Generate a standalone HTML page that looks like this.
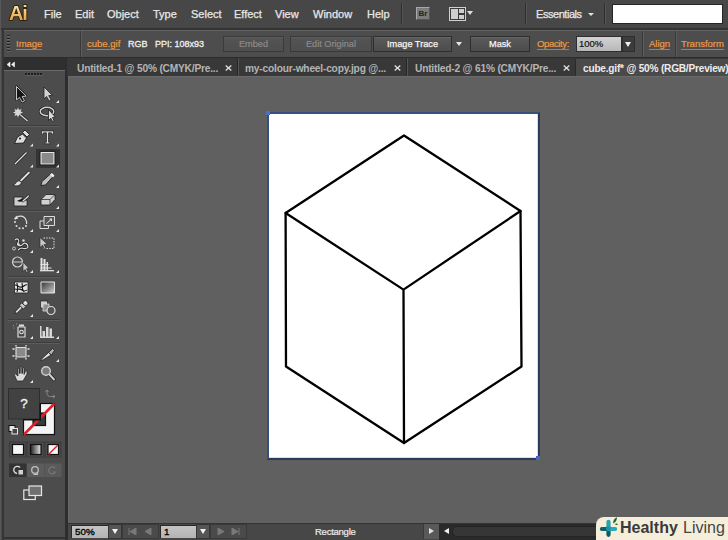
<!DOCTYPE html>
<html><head><meta charset="utf-8">
<style>
*{margin:0;padding:0;box-sizing:border-box}
html,body{width:728px;height:540px;overflow:hidden;background:#606060;font-family:"Liberation Sans",sans-serif}
.a{position:absolute}
.menu{left:0;top:0;width:728px;height:28px;background:#474747}
.mi{position:absolute;top:8px;font-size:11px;color:#e8e8e8;line-height:12px;white-space:nowrap;-webkit-text-stroke:0.25px #e8e8e8}
.ctl{left:3px;top:30px;width:725px;height:27px;background:#4d4d4d;border-top:1px solid #626262;border-left:1px solid #5e5e5e}
.ct{position:absolute;top:39px;font-size:9.5px;line-height:10px;color:#f0f0f0;white-space:nowrap}
.lk{color:#ec9a44;border-bottom:1px solid #c8782e;padding-bottom:0px;-webkit-text-stroke:0.2px #ec9a44}
.btn{position:absolute;top:36px;height:16px;background:linear-gradient(#5a5a5a,#4c4c4c);border:1px solid #2e2e2e;box-shadow:inset 0 1px 0 #666;font-size:9.2px;line-height:14px;text-align:center;color:#f4f4f4;-webkit-text-stroke:0.25px #f4f4f4}
.dis{color:#8a8a8a;-webkit-text-stroke:0.2px #8a8a8a;background:linear-gradient(#545454,#4e4e4e);box-shadow:inset 0 1px 0 #5c5c5c;border-color:#3a3a3a}
.tabs{left:67px;top:58px;width:661px;height:18px;background:#383838}
.tab{position:absolute;top:63px;font-size:10.2px;letter-spacing:-0.2px;font-weight:bold;line-height:11px;color:#b4b4b4;white-space:nowrap}
.x{position:absolute;top:62px;font-size:11px;font-weight:bold;color:#dcdcdc;line-height:12px}
.sep{position:absolute;width:1px;background:#2e2e2e;box-shadow:1px 0 0 #555}
</style></head><body>
<!-- menu bar -->
<div class="a menu"></div>
<div class="a" style="left:0;top:28px;width:728px;height:2px;background:#343434"></div>
<div class="a" style="left:9px;top:2px;font-size:20px;font-weight:bold;line-height:22px;letter-spacing:-1.2px;color:#2a1c08;-webkit-text-stroke:1.6px #2a1c08">Ai</div>
<div class="a" style="left:9px;top:2px;font-size:20px;font-weight:bold;line-height:22px;letter-spacing:-1.2px;background:linear-gradient(#f8dc98 25%,#e8a040 85%);-webkit-background-clip:text;background-clip:text;color:transparent">Ai</div>
<div class="mi" style="left:44px">File</div>
<div class="mi" style="left:75px">Edit</div>
<div class="mi" style="left:107px">Object</div>
<div class="mi" style="left:153px">Type</div>
<div class="mi" style="left:191px">Select</div>
<div class="mi" style="left:234px">Effect</div>
<div class="mi" style="left:275px">View</div>
<div class="mi" style="left:313px">Window</div>
<div class="mi" style="left:367px">Help</div>
<div class="sep" style="left:401px;top:3px;height:21px"></div>
<div class="a" style="left:416px;top:7px;width:14px;height:13px;background:#7c7c7c;border:1px solid #a8a8a8;border-right-color:#555;border-bottom-color:#555;font-size:8px;color:#222;text-align:center;line-height:11px;font-weight:bold">Br</div>
<div class="a" style="left:449px;top:7px;width:17px;height:14px;border:1px solid #d0d0d0;background:#3a3a3a"></div>
<div class="a" style="left:451px;top:9px;width:7px;height:10px;background:#cfcfcf"></div>
<div class="a" style="left:459px;top:9px;width:5px;height:4px;background:#cfcfcf"></div>
<div class="a" style="left:459px;top:15px;width:5px;height:4px;background:#cfcfcf"></div>
<div class="a" style="left:467px;top:11px;width:0;height:0;border-left:3px solid transparent;border-right:3px solid transparent;border-top:4px solid #e0e0e0"></div>
<div class="sep" style="left:525px;top:3px;height:21px"></div>
<div class="mi" style="left:536px;letter-spacing:-0.45px">Essentials</div>
<div class="a" style="left:588px;top:13px;width:0;height:0;border-left:3px solid transparent;border-right:3px solid transparent;border-top:3px solid #e0e0e0"></div>
<div class="sep" style="left:604px;top:3px;height:21px"></div>
<div class="a" style="left:612px;top:4px;width:111px;height:20px;background:#fff;border:1px solid #262626"></div>

<!-- control bar -->
<div class="a ctl"></div>
<div class="a" style="left:0;top:57px;width:728px;height:1px;background:#2b2b2b"></div>
<div class="ct lk" style="left:16px">Image</div>
<div class="sep" style="left:80px;top:31px;height:26px;background:#383838;box-shadow:1px 0 0 #5c5c5c"></div>
<div class="ct lk" style="left:87px">cube.gif</div>
<div class="ct" style="left:128px;font-size:9px;-webkit-text-stroke:0.3px #f0f0f0">RGB</div>
<div class="ct" style="left:155px;font-size:9px;-webkit-text-stroke:0.3px #f0f0f0">PPI: 108x93</div>
<div class="btn dis" style="left:223px;width:61px">Embed</div>
<div class="btn dis" style="left:290px;width:82px">Edit Original</div>
<div class="btn" style="left:373px;width:79px">Image Trace</div>
<div class="a" style="left:456px;top:42px;width:0;height:0;border-left:3px solid transparent;border-right:3px solid transparent;border-top:4px solid #e6e6e6"></div>
<div class="btn" style="left:470px;width:60px">Mask</div>
<div class="ct lk" style="left:537px;letter-spacing:-0.35px">Opacity:</div>
<div class="a" style="left:576px;top:36px;width:46px;height:16px;background:linear-gradient(#d2d2d2,#b8b8b8);border:1px solid #2e2e2e;font-size:9.5px;line-height:14px;color:#111;padding-left:2px;-webkit-text-stroke:0.2px #111">100%</div>
<div class="a" style="left:622px;top:36px;width:13px;height:16px;background:#3c3c3c;border:1px solid #2e2e2e"></div>
<div class="a" style="left:625px;top:42px;width:0;height:0;border-left:3.5px solid transparent;border-right:3.5px solid transparent;border-top:5px solid #f0f0f0"></div>
<div class="sep" style="left:642px;top:31px;height:26px;background:#383838;box-shadow:1px 0 0 #5c5c5c"></div>
<div class="ct lk" style="left:649px">Align</div>
<div class="sep" style="left:675px;top:31px;height:26px;background:#383838;box-shadow:1px 0 0 #5c5c5c"></div>
<div class="ct lk" style="left:681px">Transform</div>

<!-- left strip & panel -->
<div class="a" style="left:0;top:0;width:1px;height:540px;background:#585858"></div>
<div class="a" style="left:1px;top:30px;width:1px;height:510px;background:#4a4a4a"></div>
<div class="a" style="left:2px;top:30px;width:2px;height:510px;background:#363636"></div>
<div class="a" style="left:4px;top:58px;width:61px;height:482px;background:#4c4c4c"></div>
<div class="a" style="left:4px;top:58px;width:61px;height:12px;background:#2f2f2f"></div>
<div class="a" style="left:4px;top:70px;width:61px;height:1px;background:#6a6a6a"></div>
<div class="a" style="left:65px;top:58px;width:3px;height:482px;background:#2d2d2d"></div>
<div class="a" style="left:4px;top:537px;width:61px;height:2px;background:#333"></div>
<svg class="a" style="left:6px;top:61px" width="10" height="7"><path d="M4 1L1 3.5 4 6zM8.5 1L5.5 3.5 8.5 6z" fill="#f0f0f0" stroke="#f0f0f0" stroke-width=".6" stroke-linejoin="round"/></svg>
<div class="a" style="left:7px;top:35px;width:3px;height:17px;background:repeating-linear-gradient(#222 0 1px,#6a6a6a 1px 2px,#505050 2px 3px)"></div>
<svg class="a" style="left:0;top:0" width="68" height="540">
<defs>
<linearGradient id="gr" x1="0" y1="0" x2="1" y2="0"><stop offset="0" stop-color="#222"/><stop offset="1" stop-color="#e8e8e8"/></linearGradient>
<linearGradient id="gr2" x1="0" y1="0" x2="1" y2="1"><stop offset="0" stop-color="#333"/><stop offset="1" stop-color="#cfcfcf"/></linearGradient>
</defs>
<!-- gripper -->
<g fill="#1e1e1e"><rect x="25" y="73" width="2" height="2"/><rect x="28" y="73" width="2" height="2"/><rect x="31" y="73" width="2" height="2"/><rect x="34" y="73" width="2" height="2"/><rect x="37" y="73" width="2" height="2"/><rect x="40" y="73" width="2" height="2"/></g>
<g fill="#5e5e5e"><rect x="25" y="75" width="18" height="1"/></g>
<!-- separators -->
<g fill="#3e3e3e">
<rect x="8" y="125" width="52" height="1"/><rect x="8" y="210" width="52" height="1"/>
<rect x="8" y="276" width="52" height="1"/><rect x="8" y="319" width="52" height="1"/>
<rect x="8" y="342" width="52" height="1"/>
</g>
<g fill="#5c5c5c">
<rect x="8" y="126" width="52" height="1"/><rect x="8" y="211" width="52" height="1"/>
<rect x="8" y="277" width="52" height="1"/><rect x="8" y="320" width="52" height="1"/>
<rect x="8" y="343" width="52" height="1"/>
</g>
<!-- selected rect bg -->
<rect x="36" y="149" width="24" height="19" fill="#343434"/>
<!-- flyout triangles -->
<g fill="#e8e8e8">
<path d="M59 100v3h-3z"/>
<path d="M33 143.5v3h-3z"/><path d="M59 143.5v3h-3z"/>
<path d="M33 164.5v3h-3z"/><path d="M59 164.5v3h-3z"/>
<path d="M59 185v3h-3z"/>
<path d="M59 206v3h-3z"/>
<path d="M33 229v3h-3z"/><path d="M59 229v3h-3z"/>
<path d="M33 250v3h-3z"/>
<path d="M33 270v3h-3z"/><path d="M59 270v3h-3z"/>
<path d="M33 314v3h-3z"/>
<path d="M33 336v3h-3z"/><path d="M59 336v3h-3z"/>
<path d="M59 359v3h-3z"/>
<path d="M33 380v3h-3z"/>
</g>
<g stroke-linejoin="round">
<!-- selection -->
<path d="M16.5 86.5V100l3-2.6 2.6 4.6 2.4-1.1-2.3-4.4 4.1-.4z" fill="#151515" stroke="#1a1a1a" stroke-width="2.2"/><path d="M16.5 86.5V100l3-2.6 2.6 4.6 2.4-1.1-2.3-4.4 4.1-.4z" fill="#151515" stroke="#dcdcdc" stroke-width=".9"/>
<!-- direct selection -->
<path d="M44 87v12l2.6-2.5 2.5 4.5 2-1-2.4-4.4 3.6-.3z" fill="#d2d2d2" stroke="#202020" stroke-width=".8"/>
<!-- magic wand -->
<path d="M18 106.5l1.2 3 3-1.2-1.2 3 3 1.2-3 1.2 1.2 3-3-1.2-1.2 3-1.2-3-3 1.2 1.2-3-3-1.2 3-1.2-1.2-3 3 1.2z" fill="#d6d6d6" stroke="#222" stroke-width=".5"/>
<path d="M20 114.5l7.5 6.5" stroke="#202020" stroke-width="2.6"/>
<path d="M20 114.5l7.5 6.5" stroke="#d8d8d8" stroke-width="1.3"/>
<!-- lasso -->
<ellipse cx="47" cy="111.5" rx="6.8" ry="4.2" fill="none" stroke="#1c1c1c" stroke-width="2.8"/>
<ellipse cx="47" cy="111.5" rx="6.8" ry="4.2" fill="none" stroke="#d4d4d4" stroke-width="1.4"/>
<path d="M48.5 109.5v11l2.3-2.2 1.8 3.2 1.6-.8-1.7-3.2 3-.3z" fill="#d8d8d8" stroke="#1c1c1c" stroke-width=".8"/>
<!-- pen -->
<path d="M14.5 143.5l3-6.5 5-3 4 4-3 5z" fill="#dcdcdc" stroke="#1e1e1e" stroke-width=".9"/>
<path d="M22.5 132.5l2.5-2.5 4.5 4.5-2.5 2.5z" fill="#dcdcdc" stroke="#1e1e1e" stroke-width=".9"/>
<circle cx="20" cy="138.5" r="1" fill="#111"/>
<!-- type -->
<path d="M41.5 131h12v3.2h-1.3l-.7-1.4h-3v9.4h1.6v1.6h-5.2v-1.6h1.6v-9.4h-3l-.7 1.4h-1.3z" fill="#e4e4e4" stroke="#1e1e1e" stroke-width=".7"/>
<!-- line -->
<path d="M15 164l11.5-11.5" stroke="#1e1e1e" stroke-width="2.6"/>
<path d="M15 164l11.5-11.5" stroke="#e0e0e0" stroke-width="1.2"/>
<!-- rect -->
<rect x="41" y="152.5" width="13" height="11.5" fill="#8a8a8a" stroke="#e6e6e6" stroke-width="1.2"/>
<rect x="39.8" y="151.3" width="15.4" height="13.9" fill="none" stroke="#1e1e1e" stroke-width=".8"/>
<!-- brush -->
<path d="M21 180.5l8-8" stroke="#1e1e1e" stroke-width="3.2" stroke-linecap="round"/>
<path d="M21 180.5l8-8" stroke="#e0e0e0" stroke-width="1.8" stroke-linecap="round"/>
<path d="M13 185.5c2-1 3-4 6-5l2.5 2c-1 3-4 4-8.5 3z" fill="#e0e0e0" stroke="#1e1e1e" stroke-width=".8"/>
<!-- pencil -->
<path d="M41 185.5l1-4 9.5-8.5 2.5 2.5-8.5 9.5z" fill="#bdbdbd" stroke="#1e1e1e" stroke-width=".9"/>
<path d="M50 174.5l2-1.5 2.5 2.5-1.5 2z" fill="#f0f0f0"/>
<!-- blob brush -->
<path d="M14 197h9l-2 3h6v6H14z" fill="#cfcfcf" stroke="#1e1e1e" stroke-width=".8"/>
<path d="M17 201c3-2 6-2 8-1-2 2-5 2-8 1z" fill="#111"/>
<path d="M23 201l5.5-5" stroke="#1e1e1e" stroke-width="2.6" stroke-linecap="round"/>
<path d="M23 201l5.5-5" stroke="#e0e0e0" stroke-width="1.3" stroke-linecap="round"/>
<!-- eraser -->
<path d="M41 199.5l5-5h9v5l-5 5.5h-9z" fill="#d0d0d0" stroke="#1e1e1e" stroke-width=".8"/>
<path d="M41 199.5h9l5-5M50 199.5V205" fill="none" stroke="#1e1e1e" stroke-width=".7"/>
<!-- rotate -->
<g fill="#dedede">
<circle cx="15" cy="222" r="1"/><circle cx="16.5" cy="226" r="1"/><circle cx="19.5" cy="228.3" r="1"/><circle cx="23" cy="228.3" r="1"/><circle cx="26" cy="226" r="1"/>
</g>
<path d="M15 219.5a6 6 0 0 1 11 0.5 6 6 0 0 1 .5 4" fill="none" stroke="#dedede" stroke-width="1.2"/>
<path d="M16.5 215.5l-2.5 3.5h4z" fill="#dedede"/>
<!-- scale -->
<rect x="40" y="221" width="8.5" height="7.5" fill="none" stroke="#dcdcdc" stroke-width="1"/>
<rect x="44" y="216.5" width="10.5" height="9" fill="#555" stroke="#dcdcdc" stroke-width="1"/>
<path d="M46.5 223.5l5-4.5M49.5 219h2v2" fill="none" stroke="#e6e6e6" stroke-width="1"/>
<!-- warp -->
<path d="M15 240c3-3 5 1 3 3s3 4 5 1c2-2 5 0 5 3-1 2-4 2-6 1-2 0-3 1-4 2" fill="none" stroke="#1e1e1e" stroke-width="2.6"/>
<path d="M15 240c3-3 5 1 3 3s3 4 5 1c2-2 5 0 5 3-1 2-4 2-6 1-2 0-3 1-4 2" fill="none" stroke="#dcdcdc" stroke-width="1.2"/>
<circle cx="14" cy="248.5" r="1.5" fill="#555" stroke="#dcdcdc" stroke-width=".8"/>
<circle cx="18.5" cy="244.5" r="1.2" fill="#dcdcdc"/><circle cx="23.5" cy="240.5" r="1.2" fill="#dcdcdc"/>
<!-- free transform -->
<path d="M43.5 238h10.5v10.5H43.5" fill="none" stroke="#dcdcdc" stroke-width="1" stroke-dasharray="1.5 1.2"/>
<path d="M40 237.5v10l2.5-2.3 2 3.7 1.4-.7-2-3.6 3.5-.4z" fill="#c8c8c8" stroke="#202020" stroke-width=".6"/>
<!-- shape builder -->
<circle cx="17.5" cy="262" r="5" fill="none" stroke="#d0d0d0" stroke-width="1.2"/>
<path d="M13 262h9" stroke="#d0d0d0" stroke-width="1"/>
<path d="M23 262v9.5l2-2 1.6 3 1.4-.7-1.6-3 2.6-.2z" fill="#c8c8c8" stroke="#202020" stroke-width=".6"/>
<!-- perspective grid -->
<g fill="#e0e0e0">
<rect x="40.5" y="258" width="2" height="13"/><rect x="43.5" y="259" width="2" height="12"/><rect x="46.5" y="262" width="1.5" height="9"/>
<rect x="40" y="270" width="14" height="1.3"/><rect x="40.5" y="267.5" width="11" height="1"/><rect x="40.5" y="264" width="8" height="1"/>
</g>
<!-- mesh -->
<rect x="14.5" y="282" width="13.5" height="11" fill="#e6e6e6" stroke="#1e1e1e" stroke-width=".8"/>
<path d="M15 285c3 0 4 3 7 2s3-3 5-2M17 283c0 3 2 5 0 9M22 283c1 3-1 5 2 9M15 289c3 1 5-1 7 1s3 1 5 0" fill="none" stroke="#111" stroke-width="1.1"/>
<!-- gradient -->
<rect x="41" y="282" width="13.5" height="11" fill="url(#gr2)" stroke="#e6e6e6" stroke-width="1"/>
<!-- eyedropper -->
<g transform="translate(15 313.5) rotate(-45)" stroke="#1e1e1e" stroke-width=".8">
<path d="M0 0l2-1.3h7.5v2.6H2z" fill="#d8d8d8"/>
<rect x="9" y="-2.8" width="3.5" height="5.6" fill="#c8c8c8"/>
<rect x="12.5" y="-2.3" width="4.5" height="4.6" rx="1.5" fill="#e0e0e0"/>
</g>
<!-- blend -->
<rect x="40.5" y="301" width="7" height="7" fill="#cfcfcf" stroke="#1e1e1e" stroke-width=".7"/>
<rect x="43" y="304" width="6" height="7" fill="#8f8f8f" stroke="#dcdcdc" stroke-width=".8"/>
<circle cx="51" cy="310.5" r="4" fill="#555" stroke="#dcdcdc" stroke-width="1.2"/>
<!-- symbol sprayer -->
<path d="M13 325.5h1M13.5 328h1M16 324h1" stroke="#9a9a9a" stroke-width="1"/>
<rect x="19" y="324.5" width="5" height="2" fill="#dcdcdc"/>
<rect x="18" y="327" width="7" height="10" fill="#444" stroke="#dcdcdc" stroke-width="1.2"/>
<circle cx="21.5" cy="332" r="1.8" fill="#444" stroke="#e6e6e6" stroke-width="1.1"/>
<!-- graph -->
<g fill="#d8d8d8">
<rect x="40" y="326" width="1.5" height="12"/><rect x="40" y="336.5" width="14" height="1.5"/>
<rect x="42.5" y="331" width="2.5" height="6"/><rect x="46" y="327" width="2.5" height="10"/><rect x="49.5" y="328.5" width="2.5" height="8.5"/>
</g>
<!-- artboard -->
<rect x="16" y="347.5" width="10" height="9.5" fill="#8a8a8a" stroke="#e0e0e0" stroke-width="1.1"/>
<path d="M16 345v1.5M26 345v1.5M16 358v1.5M26 358v1.5M12.5 349h2M12.5 356h2M27.5 349h2M27.5 356h2" stroke="#e6e6e6" stroke-width="1.3"/>
<!-- slice -->
<path d="M40.5 360l8-7.5 2.5 2.5-8 5z" fill="#dcdcdc" stroke="#1e1e1e" stroke-width=".8"/>
<path d="M48.5 352.5l4-4 2 2-3 4.5z" fill="#b0b0b0" stroke="#1e1e1e" stroke-width=".8"/>
<!-- hand -->
<path d="M17 381h6l4-7v-2.5c-1-1-2 0-2 1l-1 2v-6c0-1-1.5-1-1.5 0v5v-6.5c0-1-1.5-1-1.5 0v6.5v-6c0-1-1.5-1-1.5 0v6v-4.5c0-1-1.5-1-1.5 0v7l-2.5-2c-1-.5-1.5.5-1 1z" fill="#dadada" stroke="#1e1e1e" stroke-width=".7"/>
<!-- zoom -->
<path d="M49 374l5 5.5" stroke="#1e1e1e" stroke-width="3.4" stroke-linecap="round"/>
<path d="M49 374l5 5.5" stroke="#d0d0d0" stroke-width="2" stroke-linecap="round"/>
<circle cx="46" cy="371" r="4.3" fill="#7a7a7a" stroke="#d0d0d0" stroke-width="1.4"/>
</g>
<!-- fill / stroke -->
<rect x="23.5" y="403.5" width="31" height="31" fill="#f4f4f4" stroke="#111" stroke-width="1.2"/>
<rect x="33" y="413" width="12.5" height="12.5" fill="#3a3a3a" stroke="#111" stroke-width="1.2"/>
<path d="M24 434.5L54.5 403.5" stroke="#d8232a" stroke-width="2.5"/>
<rect x="8.5" y="388.5" width="31" height="30.5" fill="#424242" stroke="#2e2e2e" stroke-width="1"/>
<path d="M40.3 403v16.8H23" fill="none" stroke="#111" stroke-width="1.4"/>
<rect x="8.5" y="388.5" width="30.5" height="30" fill="none" stroke="#595959" stroke-width="0"/>
<text x="24" y="407.5" font-family="Liberation Sans" font-size="13.5" fill="#f4f4f4" stroke="#f4f4f4" stroke-width=".3" text-anchor="middle">?</text>
<!-- swap arrows -->
<path d="M47 390v3.5c0 2 1.5 3 3.5 3H55M47 390l-1.5 2M47 390l1.5 2M55 396.5l-2-1.5M55 396.5l-2 1.5" fill="none" stroke="#8a8a8a" stroke-width=".9"/>
<!-- default fill stroke -->
<rect x="9" y="425.5" width="6" height="6" fill="#e6e6e6" stroke="#111" stroke-width="1"/>
<rect x="12" y="428.5" width="5.5" height="5.5" fill="#444" stroke="#e6e6e6" stroke-width="1"/>
<!-- mode buttons -->
<rect x="9.5" y="442" width="16.5" height="15" fill="#4a4a4a" stroke="#3a3a3a"/>
<rect x="27" y="442" width="17" height="15" fill="#4a4a4a" stroke="#3a3a3a"/>
<rect x="45" y="442" width="16" height="15" fill="#4a4a4a" stroke="#3a3a3a"/>
<rect x="12.5" y="444.5" width="11" height="10" fill="#f6f6f6" stroke="#111" stroke-width="1.2"/>
<rect x="30.5" y="444.5" width="10.5" height="10" fill="url(#gr)" stroke="#111" stroke-width="1.2"/>
<rect x="48" y="444.5" width="10.5" height="10" fill="#f6f6f6" stroke="#111" stroke-width="1.2"/>
<path d="M48.5 454.5l9.5-9.5" stroke="#d8232a" stroke-width="1.4"/>
<!-- draw modes -->
<rect x="9" y="463.5" width="17.5" height="13.5" fill="#333"/>
<rect x="27" y="463.5" width="17" height="13.5" fill="#5c5c5c"/>
<rect x="44.5" y="463.5" width="17" height="13.5" fill="#5a5a5a"/>
<path d="M20 467.5a3.6 3.6 0 1 0-3 6" fill="none" stroke="#e0e0e0" stroke-width="1.3"/>
<rect x="18.5" y="470" width="4.5" height="4.5" fill="#d0d0d0"/>
<circle cx="35" cy="470" r="3.3" fill="none" stroke="#c0c0c0" stroke-width="1.3"/>
<path d="M37.5 472v2.5h-4" fill="none" stroke="#c0c0c0" stroke-width="1.1"/>
<path d="M55 468a3.5 3.5 0 1 0 .5 4h-2.5" fill="none" stroke="#777" stroke-width="1.2"/>
<!-- screen mode -->
<rect x="23.8" y="490" width="11.5" height="9.5" fill="none" stroke="#e6e6e6" stroke-width="1.2"/>
<rect x="29" y="486" width="12.5" height="9.5" fill="#707070" stroke="#e6e6e6" stroke-width="1.2"/>
</svg>

<!-- tabs -->
<div class="a tabs"></div>
<div class="a" style="left:575px;top:59px;width:153px;height:17px;background:#4a4a4a;border-left:1px solid #2a2a2a"></div>
<div class="tab" style="left:77px">Untitled-1 @ 50% (CMYK/Pre...</div>
<svg class="a" style="left:225px;top:65px" width="7" height="6"><path d="M0.7 0.5l5.6 5M6.3 0.5l-5.6 5" stroke="#e0e0e0" stroke-width="1.3"/></svg>
<div class="sep" style="left:237px;top:58px;height:18px;background:#262626"></div>
<div class="tab" style="left:245px">my-colour-wheel-copy.jpg @...</div>
<svg class="a" style="left:394px;top:65px" width="7" height="6"><path d="M0.7 0.5l5.6 5M6.3 0.5l-5.6 5" stroke="#e0e0e0" stroke-width="1.3"/></svg>
<div class="sep" style="left:406px;top:58px;height:18px;background:#262626"></div>
<div class="tab" style="left:415px">Untitled-2 @ 61% (CMYK/Pre...</div>
<svg class="a" style="left:563px;top:65px" width="7" height="6"><path d="M0.7 0.5l5.6 5M6.3 0.5l-5.6 5" stroke="#e0e0e0" stroke-width="1.3"/></svg>
<div class="tab" style="left:583px;color:#ececec;font-size:10.1px;letter-spacing:-0.2px">cube.gif* @ 50% (RGB/Preview)</div>

<div class="a" style="left:68px;top:76px;width:660px;height:1px;background:#6a6a6a"></div>
<div class="a" style="left:68px;top:76px;width:1px;height:447px;background:#676767"></div>
<!-- artboard board -->
<div class="a" style="left:267px;top:112px;width:273px;height:348px;border:2px solid #36517f;border-right:2px solid #2c3a5c;border-bottom:2px solid #2c3a5c;background:#fff;box-shadow:inset -1px -1px 0 #d8dce8"></div>
<div class="a" style="left:266px;top:111px;width:4px;height:4px;background:#4f6fc0"></div><div class="a" style="left:536px;top:456px;width:4px;height:4px;background:#4a66b8"></div>
<svg class="a" style="left:0;top:0" width="728" height="540">
<g fill="none" stroke="#000" stroke-width="2.3" stroke-linejoin="round" stroke-linecap="round">
<path d="M404 135.5 L285.6 213 L286 366.5 L404 443 L521.5 366.5 L520.5 211 Z"/>
<path d="M285.6 213 L403.5 289.6 L520.5 211 M403.5 289.6 L404 443"/>
</g>
</svg>

<!-- status bar -->
<div class="a" style="left:68px;top:523px;width:660px;height:17px;background:#474747;border-top:1px solid #343434"></div>
<div class="a" style="left:71px;top:525px;width:38px;height:13px;background:linear-gradient(#c4c4c4,#b4b4b4);border-top:1px solid #2a2a2a;border-left:1px solid #2a2a2a;font-size:9.8px;line-height:12px;color:#000;padding-left:3px;-webkit-text-stroke:0.35px #000">50%</div>
<div class="a" style="left:108px;top:524px;width:14px;height:15px;background:#555;border:1px solid #353535"></div>
<div class="a" style="left:112px;top:529px;width:0;height:0;border-left:3.5px solid transparent;border-right:3.5px solid transparent;border-top:5px solid #f4f4f4"></div>
<div class="a" style="left:122px;top:524px;width:37px;height:15px;background:#4a4a4a;border:1px solid #3a3a3a"></div>
<svg class="a" style="left:128px;top:528px" width="24" height="7"><path d="M1 0v7M8 0L2 3.5 8 7zM23 0L17 3.5 23 7z" fill="#787878" stroke="#787878" stroke-width="1"/></svg>
<div class="a" style="left:160px;top:525px;width:37px;height:13px;background:linear-gradient(#c4c4c4,#b4b4b4);border-top:1px solid #2a2a2a;border-left:1px solid #2a2a2a;font-size:9.8px;line-height:12px;color:#000;padding-left:3px;-webkit-text-stroke:0.35px #000">1</div>
<div class="a" style="left:196px;top:524px;width:14px;height:15px;background:#555;border:1px solid #353535"></div>
<div class="a" style="left:200px;top:529px;width:0;height:0;border-left:3.5px solid transparent;border-right:3.5px solid transparent;border-top:5px solid #f4f4f4"></div>
<div class="a" style="left:210px;top:524px;width:37px;height:15px;background:#4a4a4a;border:1px solid #3a3a3a"></div>
<svg class="a" style="left:217px;top:528px" width="24" height="7"><path d="M1 0L7 3.5 1 7zM15 0L21 3.5 15 7zM22 0v7" fill="#787878" stroke="#787878" stroke-width="1"/></svg>
<div class="a" style="left:315px;top:526px;font-size:9.5px;line-height:11px;letter-spacing:-0.25px;color:#ececec;-webkit-text-stroke:0.2px #ececec">Rectangle</div>
<div class="a" style="left:423px;top:524px;width:16px;height:15px;background:#595959;border-left:1px solid #3a3a3a"></div>
<div class="a" style="left:429px;top:528px;width:0;height:0;border-top:3.5px solid transparent;border-bottom:3.5px solid transparent;border-left:5px solid #e0e0e0"></div>
<div class="a" style="left:439px;top:524px;width:160px;height:16px;background:#2a2a2a"></div>
<div class="a" style="left:452px;top:526px;width:150px;height:11px;background:#363636;border:1px solid #242424;border-radius:5px"></div>
<div class="a" style="left:444px;top:528px;width:0;height:0;border-top:3.5px solid transparent;border-bottom:3.5px solid transparent;border-right:5px solid #f0f0f0"></div>

<!-- badge -->
<div class="a" style="left:596px;top:517px;width:140px;height:30px;background:#f4eedb;border-radius:8px 0 0 0"></div>
<div class="a" style="left:620px;top:519px;font-size:16px;font-weight:bold;color:#3a3a3a;line-height:18px">Healthy</div>
<div class="a" style="left:683px;top:519px;font-size:16px;color:#444;line-height:18px">Living</div>
<svg class="a" style="left:596px;top:516px" width="30" height="24">
<path d="M12.5 5.9v6" stroke="#25a3b3" stroke-width="4.2" stroke-linecap="round"/>
<path d="M12.5 13v5.8" stroke="#0f5a66" stroke-width="4.2" stroke-linecap="round"/>
<path d="M5.8 13h6.5" stroke="#125f6b" stroke-width="4" stroke-linecap="round"/>
<path d="M12.5 13h6.7" stroke="#2aa9b8" stroke-width="4" stroke-linecap="round"/>
<path d="M12.5 10.5v4" stroke="#1f93a2" stroke-width="4.2"/>
<path d="M17 7.5Q17.5 2 21 1.2 21 6 17 7.5Z" fill="#1f6a26"/>
<ellipse cx="20.5" cy="8.2" rx="1.4" ry=".8" fill="#1f6a26"/>
</svg>
</body></html>
